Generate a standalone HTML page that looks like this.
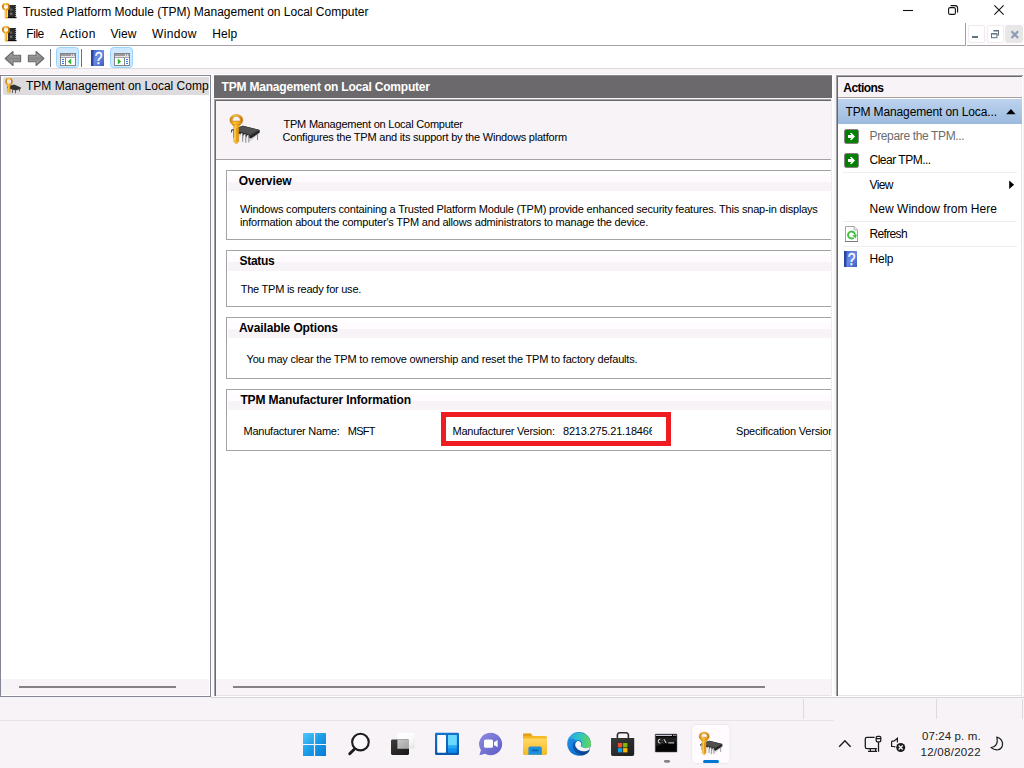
<!DOCTYPE html>
<html lang="en"><head><meta charset="utf-8"><title>Trusted Platform Module (TPM) Management on Local Computer</title>
<style>
html,body{margin:0;padding:0}
body{width:1024px;height:768px;overflow:hidden;background:#f7f3f7;position:relative;font-family:"Liberation Sans",Arial,sans-serif}
#s{position:absolute;left:0;top:0;width:1024px;height:768px;overflow:hidden}
#s div,#s span.t,#s svg{position:absolute}
#s span.t{white-space:pre;display:block}
#s svg{overflow:visible}
</style></head><body><div id="s">
<svg width="0" height="0" style="left:0;top:0"><defs>
<linearGradient id="gold" x1="0" x2="1" y1="0" y2="0"><stop offset="0" stop-color="#c77a00"/><stop offset=".35" stop-color="#ffc93c"/><stop offset=".7" stop-color="#f5a417"/><stop offset="1" stop-color="#b86c00"/></linearGradient>
<linearGradient id="goldv" x1="0" x2="0" y1="0" y2="1"><stop offset="0" stop-color="#ffd55a"/><stop offset="1" stop-color="#e8920a"/></linearGradient>
<linearGradient id="garr" x1="0" x2="0" y1="0" y2="1"><stop offset="0" stop-color="#b4b4b4"/><stop offset=".5" stop-color="#888"/><stop offset="1" stop-color="#acacac"/></linearGradient>
<linearGradient id="hlp" x1="0" x2="1" y1="0" y2="1"><stop offset="0" stop-color="#3b5fc4"/><stop offset=".5" stop-color="#6b8be6"/><stop offset="1" stop-color="#3a5cc0"/></linearGradient>
<linearGradient id="winlogo" gradientUnits="userSpaceOnUse" x1="303" y1="733" x2="326" y2="756"><stop offset="0" stop-color="#4fc8fa"/><stop offset=".5" stop-color="#1b9be8"/><stop offset="1" stop-color="#067ad6"/></linearGradient>
<linearGradient id="edge1" x1="0" x2="1" y1="0" y2="1"><stop offset="0" stop-color="#2398ea"/><stop offset=".5" stop-color="#147ad6"/><stop offset="1" stop-color="#0f5fbe"/></linearGradient>
<linearGradient id="edge3" x1="0" x2="1" y1="0" y2="1"><stop offset="0" stop-color="#0f5cb8"/><stop offset="1" stop-color="#0a3f8c"/></linearGradient>
<linearGradient id="bag" x1="0" x2="1" y1="0" y2="1"><stop offset="0" stop-color="#3b3b3b"/><stop offset="1" stop-color="#1e1e1e"/></linearGradient>
<linearGradient id="edge2" x1="0" x2="1" y1="0" y2="0"><stop offset="0" stop-color="#27a0ec"/><stop offset=".5" stop-color="#2ec4c4"/><stop offset="1" stop-color="#66d650"/></linearGradient>
<linearGradient id="fold" x1="0" x2="0" y1="0" y2="1"><stop offset="0" stop-color="#ffd966"/><stop offset="1" stop-color="#f5b921"/></linearGradient>
<linearGradient id="chat" x1="0" x2="1" y1="0" y2="1"><stop offset="0" stop-color="#8f8be0"/><stop offset="1" stop-color="#5d5bc7"/></linearGradient>
<linearGradient id="tvw" x1="0" x2="1" y1="0" y2="1"><stop offset="0" stop-color="#ffffff"/><stop offset=".6" stop-color="#fafafa"/><stop offset="1" stop-color="#e2e2e2"/></linearGradient>
<linearGradient id="tvo" x1="0" x2="1" y1="0" y2="1"><stop offset="0" stop-color="#c8c8c8"/><stop offset="1" stop-color="#a2a2a2"/></linearGradient>
<linearGradient id="wdg" x1="0" x2="0" y1="0" y2="1"><stop offset="0" stop-color="#1673cc"/><stop offset="1" stop-color="#0a57ab"/></linearGradient>
<linearGradient id="tvd" x1="0" x2="1" y1="0" y2="1"><stop offset="0" stop-color="#3c3c3c"/><stop offset="1" stop-color="#161616"/></linearGradient>
<g id="keychip16">
 <rect x="8" y="5" width="8" height="12.2" fill="#2b2b2b"/>
 <rect x="7.5" y="17" width="9" height="1.2" fill="#0c0c0c"/>
 <rect x="10" y="8.4" width="2.4" height="2.4" fill="#5a5a5a"/><rect x="10" y="12.6" width="2.4" height="2.4" fill="#6a6a6a"/>
 <path d="M15.4 6.5h1.8M15.4 8.5h1.8M15.4 10.5h1.8M15.4 12.5h1.8M15.4 14.5h1.8M15.4 16.5h1.8" stroke="#dfe6f5" stroke-width="1"/>
 <ellipse cx="6" cy="6.8" rx="3.1" ry="2.9" fill="none" stroke="url(#gold)" stroke-width="1.9"/>
 <ellipse cx="6" cy="6.2" rx="2.1" ry="1.1" fill="#f3ede0"/>
 <path d="M4.3 9.2q1.700 .9 3.400 0l-.5 1.400v7.400l-1.200 1.200-1.200-1.200v-7.400z" fill="url(#gold)"/>
</g>
<g id="keychip32">
 <path d="M17 26l20.700-2.500v2.500L29 33l-12-5z" fill="#000" opacity=".10"/>
 <path d="M9 22L20.800 17.800 37.700 21.900 37.700 24.600 29 30.600 17 25.700 9 24.500z" fill="#262626"/>
 <path d="M9 22L20.800 17.800 37.700 21.900 28.500 27.400 17 23.400z" fill="#474747"/>
 <path d="M12 21.800L20.800 18.600 35 22 28.400 25.900z" fill="#5a5a5a" opacity=".55"/>
 <path d="M10.600 22.500v7M19.600 25.300v8.500M22.700 26.300v8.500M25.800 27.300v7.200" stroke="#f4f4f8" stroke-width="1.700"/>
 <path d="M11.600 23v6.500M20.700 26v7.800M23.800 27v7.800M26.900 28v6.500M35.500 26.500v5.500" stroke="#77777f" stroke-width=".9"/>
 <ellipse cx="14.350" cy="12.100" rx="6.500" ry="5.700" fill="url(#gold)" stroke="#c07c0a" stroke-width=".5"/>
 <path d="M10.100 13.100a4.250 4.900 0 0 1 8.500 0z" fill="#f7f3f7" stroke="#b26d05" stroke-width=".5"/>
 <path d="M10.300 16.300h8.100l-1.600 2.200v15l-2.500 2.500-2.500-2.500v-15z" fill="url(#gold)" stroke="#c07c0a" stroke-width=".4"/>
 <path d="M14.900 20v13.500" stroke="#b86c00" stroke-width=".7" opacity=".75"/>
 <path d="M12.600 19.500v13.500" stroke="#ffe38a" stroke-width=".7" opacity=".8"/>
</g>
</defs></svg><div style="left:0px;top:0px;width:1024px;height:45px;background:#fff"></div><div style="left:0px;top:45px;width:966px;height:1px;background:#a5a2a5"></div><div style="left:0px;top:46px;width:1024px;height:22px;background:#fff"></div><div style="left:0px;top:68px;width:1024px;height:1px;background:#dedbde"></div><div style="left:0px;top:74px;width:1024px;height:1px;background:#fffbff"></div><div style="left:211px;top:75px;width:1px;height:623px;background:#fffbff"></div><div style="left:213px;top:75px;width:1px;height:623px;background:#fffbff"></div><svg style="left:0;top:-2px" width="20" height="24" viewBox="0 0 20 24"><use href="#keychip16" y="2"/></svg><span class="t" style="left:23px;top:2.84px;font:normal 12px/18px 'Liberation Sans',Arial,sans-serif;color:#000;letter-spacing:-0.003px;">Trusted Platform Module (TPM) Management on Local Computer</span><svg style="left:896px;top:0" width="128" height="22" viewBox="896 0 128 22" fill="none" stroke="#111" stroke-width="1.1">
<path d="M903 10.500h10"/>
<rect x="948.600" y="7.600" width="6.800" height="6.800" rx="1.500"/><path d="M950.600 5.600h4.600a2.400 2.400 0 0 1 2.400 2.400v4.600"/>
<path d="M994.400 5.400l9.200 9.200M1003.600 5.400l-9.200 9.200"/></svg><svg style="left:0;top:21px" width="20" height="24" viewBox="0 0 20 24"><use href="#keychip16" y="2"/></svg><span class="t" style="left:26.3px;top:24.84px;font:normal 12px/18px 'Liberation Sans',Arial,sans-serif;color:#000;letter-spacing:-0.445px;">File</span><span class="t" style="left:60px;top:24.84px;font:normal 12px/18px 'Liberation Sans',Arial,sans-serif;color:#000;letter-spacing:0.390px;">Action</span><span class="t" style="left:110.6px;top:24.84px;font:normal 12px/18px 'Liberation Sans',Arial,sans-serif;color:#000;letter-spacing:-0.031px;">View</span><span class="t" style="left:152px;top:24.84px;font:normal 12px/18px 'Liberation Sans',Arial,sans-serif;color:#000;letter-spacing:0.324px;">Window</span><span class="t" style="left:212.3px;top:24.84px;font:normal 12px/18px 'Liberation Sans',Arial,sans-serif;color:#000;letter-spacing:0.107px;">Help</span><div style="left:965px;top:23px;width:1px;height:22px;background:#a5a2a5"></div><div style="left:966px;top:23px;width:58px;height:23px;background:#fff"></div><div style="left:967px;top:24px;width:57px;height:21px;background:#fffbff"></div><div style="left:967px;top:45px;width:57px;height:1px;background:#a5a2a5"></div><div style="left:968px;top:25px;width:17px;height:18px;background:#fff;border:1px solid #efebef;box-sizing:border-box;border-radius:2px"></div><div style="left:987px;top:25px;width:17px;height:18px;background:#fff;border:1px solid #efebef;box-sizing:border-box;border-radius:2px"></div><div style="left:1005px;top:25px;width:18px;height:18px;background:#e7e7e7;border-radius:3px"></div><svg style="left:966px;top:23px" width="58" height="22" viewBox="966 23 58 22" fill="none" stroke="#5f7383" stroke-width="1">
<rect x="972" y="36" width="6" height="2" fill="#5f7383" stroke="none"/>
<path d="M993.500 31h5.500M998.500 30.500v4.800h-1.200" /><path d="M993.500 30.500h5.500" />
<rect x="991.500" y="34" width="5.400" height="3.700"/><path d="M991 33.600h6.400"/>
<path d="M1011.500 31.300l6.600 6.600M1018.100 31.300l-6.600 6.600" stroke="#8e9ab5" stroke-width="2.100"/></svg><svg style="left:0;top:46px" width="140" height="23" viewBox="0 46 140 23">
<path d="M5.2 58.5L13 51.5V55.3H20.6V61.7H13V65.5z" fill="url(#garr)" stroke="#6b696b" stroke-width="1.1" stroke-linejoin="round"/>
<path d="M43.9 58.5L36.1 51.5V55.3H28.4V61.7H36.1V65.5z" fill="url(#garr)" stroke="#6b696b" stroke-width="1.1" stroke-linejoin="round"/>
<rect x="50" y="49" width="1" height="18" fill="#737173"/>
<rect x="56.5" y="47.5" width="22" height="20" rx="3" fill="#cee9ff" stroke="#9cd3fb"/>
<rect x="81" y="49" width="1" height="18" fill="#737173"/>
<rect x="110.5" y="47.5" width="22" height="20" rx="3" fill="#cee9ff" stroke="#9cd3fb"/>
<!-- icon1 -->
<rect x="60.5" y="53.5" width="15" height="12" fill="#fff" stroke="#848284"/>
<rect x="61" y="54" width="14" height="2" fill="#9c9a9c"/><rect x="61" y="56" width="14" height="1" fill="#e7e3e7"/><rect x="61" y="57" width="14" height="1" fill="#a5a2a5"/>
<rect x="71" y="54.4" width="1.2" height="1.2" fill="#fff"/><rect x="73" y="54.4" width="1.2" height="1.2" fill="#fff"/>
<rect x="65" y="58" width="1" height="7" fill="#848284"/>
<path d="M62 59.5h2M62 61.5h2M62 63.5h2" stroke="#2d7bdb" stroke-width="1"/>
<path d="M71.2 58.6v5.8l-3.4-2.9z" fill="#31b231"/>
<!-- help -->
<rect x="91" y="50" width="13" height="16" fill="url(#hlp)"/><rect x="91" y="50" width="2.4" height="16" fill="#2947a0"/>
<!-- icon2 -->
<rect x="114.5" y="53.5" width="15" height="12" fill="#fff" stroke="#848284"/>
<rect x="115" y="54" width="14" height="2" fill="#9c9a9c"/><rect x="115" y="56" width="14" height="1" fill="#e7e3e7"/><rect x="115" y="57" width="14" height="1" fill="#a5a2a5"/>
<rect x="125" y="54.4" width="1.2" height="1.2" fill="#fff"/><rect x="127" y="54.4" width="1.2" height="1.2" fill="#fff"/>
<rect x="124" y="58" width="1" height="7" fill="#848284"/>
<path d="M126 59.5h2M126 61.5h2M126 63.5h2" stroke="#2d7bdb" stroke-width="1"/>
<path d="M117.8 58.6v5.8l3.4-2.9z" fill="#31b231"/>
<text transform="translate(98.600 64.200) scale(.82 1)" font-family="Liberation Sans,Arial,sans-serif" font-size="16.800" fill="#fff" text-anchor="middle" stroke="#fff" stroke-width=".3">?</text>
</svg><div style="left:0px;top:75px;width:211px;height:622px;background:#fff;border:1px solid #848694;box-sizing:border-box"></div><div style="left:3px;top:77px;width:206px;height:18px;background:#dedbde;border-radius:2px 0 0 2px"></div><div style="left:1px;top:679px;width:208px;height:16px;background:#f7f3f7"></div><div style="left:19px;top:686px;width:157px;height:2px;background:#848284"></div><svg style="left:4px;top:77px" width="20" height="18" viewBox="4 77 20 18">
<path d="M7.5 86.5L14 84.6 21 87.4 20.5 88.9 15.6 90.6 7.5 88.3z" fill="#333"/>
<path d="M9 88.5v3M12.5 89.5v3.4M15.5 90.3v3M19.5 89v2.4" stroke="#555" stroke-width="1"/>
<circle cx="9" cy="81.500" r="2.950" fill="#eee8f0" stroke="url(#gold)" stroke-width="1.400"/>
<path d="M7.600 84.600h2.800v7.600l-1.400 1.200-1.400-1.200z" fill="url(#gold)"/>
</svg><span class="t" style="left:26px;top:76.84px;font:normal 12px/18px 'Liberation Sans',Arial,sans-serif;color:#000;letter-spacing:-0.006px;">TPM Management on Local Comp</span><div style="left:214px;top:75px;width:618px;height:23px;background:#6b696b"></div><div style="left:214px;top:75px;width:618px;height:1px;background:#8c8a8c"></div><span class="t" style="left:221.6px;top:77.84px;font:bold 12px/18px 'Liberation Sans',Arial,sans-serif;color:#fff;letter-spacing:-0.203px;">TPM Management on Local Computer</span><div style="left:214px;top:99px;width:617px;height:598px;background:#fff"></div><div style="left:214px;top:99px;width:617px;height:1px;background:#a5a2a5"></div><div style="left:214px;top:100px;width:617px;height:1px;background:#6b696b"></div><div style="left:214px;top:99px;width:1px;height:597px;background:#a5a2a5"></div><div style="left:215px;top:100px;width:1px;height:596px;background:#6b696b"></div><div style="left:832px;top:75px;width:2px;height:622px;background:#fff"></div><div style="left:831px;top:99px;width:1px;height:597px;background:#efebef"></div><div style="left:216px;top:695px;width:615px;height:1px;background:#e7e3e7"></div><div style="left:211px;top:697px;width:813px;height:1px;background:#d6d3d6"></div><div style="left:216px;top:101px;width:615px;height:58px;background:#f7f3f7"></div><div style="left:216px;top:159px;width:615px;height:1px;background:#a5a2a5"></div><svg style="left:222px;top:108px" width="44" height="44" viewBox="0 0 44 44"><use href="#keychip32"/></svg><span class="t" style="left:283.5px;top:115.69px;font:normal 11px/16px 'Liberation Sans',Arial,sans-serif;color:#000;letter-spacing:-0.225px;">TPM Management on Local Computer</span><span class="t" style="left:282.5px;top:128.69px;font:normal 11px/16px 'Liberation Sans',Arial,sans-serif;color:#000;letter-spacing:-0.206px;">Configures the TPM and its support by the Windows platform</span><div style="left:216px;top:679px;width:615px;height:16px;background:#f7f3f7"></div><div style="left:233px;top:686px;width:532px;height:2px;background:#848284"></div><div style="left:226px;top:170px;width:620px;height:70px;border:1px solid #a5a2a5;box-sizing:border-box;background:#fff;clip-path:inset(0 15px 0 0)"></div><div style="left:228px;top:171px;width:603px;height:20px;background:linear-gradient(#fff 0,#fff 4px,#fffbff 4px,#fffbff 11px,#f7f3f7 11px)"></div><span class="t" style="left:238.8px;top:171.84px;font:bold 12px/18px 'Liberation Sans',Arial,sans-serif;color:#000;letter-spacing:-0.081px;">Overview</span><span class="t" style="left:240px;top:200.69px;font:normal 11px/16px 'Liberation Sans',Arial,sans-serif;color:#000;letter-spacing:-0.196px;">Windows computers containing a Trusted Platform Module (TPM) provide enhanced security features. This snap-in displays</span><span class="t" style="left:240px;top:213.69px;font:normal 11px/16px 'Liberation Sans',Arial,sans-serif;color:#000;letter-spacing:-0.194px;">information about the computer&#x27;s TPM and allows administrators to manage the device.</span><div style="left:226px;top:250px;width:620px;height:57px;border:1px solid #a5a2a5;box-sizing:border-box;background:#fff;clip-path:inset(0 15px 0 0)"></div><div style="left:228px;top:251px;width:603px;height:20px;background:linear-gradient(#fff 0,#fff 4px,#fffbff 4px,#fffbff 11px,#f7f3f7 11px)"></div><span class="t" style="left:239.4px;top:251.84px;font:bold 12px/18px 'Liberation Sans',Arial,sans-serif;color:#000;letter-spacing:-0.255px;">Status</span><span class="t" style="left:240.75px;top:281.19px;font:normal 11px/16px 'Liberation Sans',Arial,sans-serif;color:#000;letter-spacing:-0.241px;">The TPM is ready for use.</span><div style="left:226px;top:317px;width:620px;height:62px;border:1px solid #a5a2a5;box-sizing:border-box;background:#fff;clip-path:inset(0 15px 0 0)"></div><div style="left:228px;top:318px;width:603px;height:20px;background:linear-gradient(#fff 0,#fff 4px,#fffbff 4px,#fffbff 11px,#f7f3f7 11px)"></div><span class="t" style="left:239px;top:318.84px;font:bold 12px/18px 'Liberation Sans',Arial,sans-serif;color:#000;letter-spacing:-0.119px;">Available Options</span><span class="t" style="left:246.5px;top:351.19px;font:normal 11px/16px 'Liberation Sans',Arial,sans-serif;color:#000;letter-spacing:-0.178px;">You may clear the TPM to remove ownership and reset the TPM to factory defaults.</span><div style="left:226px;top:389px;width:620px;height:62px;border:1px solid #a5a2a5;box-sizing:border-box;background:#fff;clip-path:inset(0 15px 0 0)"></div><div style="left:228px;top:390px;width:603px;height:20px;background:linear-gradient(#fff 0,#fff 4px,#fffbff 4px,#fffbff 11px,#f7f3f7 11px)"></div><span class="t" style="left:240.4px;top:390.84px;font:bold 12px/18px 'Liberation Sans',Arial,sans-serif;color:#000;letter-spacing:-0.126px;">TPM Manufacturer Information</span><span class="t" style="left:243.5px;top:423.19px;font:normal 11px/16px 'Liberation Sans',Arial,sans-serif;color:#000;letter-spacing:-0.233px;">Manufacturer Name:</span><span class="t" style="left:347.8px;top:423.19px;font:normal 11px/16px 'Liberation Sans',Arial,sans-serif;color:#000;letter-spacing:-0.779px;">MSFT</span><div style="left:441px;top:412px;width:230px;height:34px;border:5px solid #ef1c21;box-sizing:border-box"></div><span class="t" style="left:452.5px;top:423.19px;font:normal 11px/16px 'Liberation Sans',Arial,sans-serif;color:#000;letter-spacing:-0.255px;">Manufacturer Version:</span><div style="left:560px;top:420px;width:92px;height:22px;overflow:hidden"><span class="t" style="left:3px;top:3.19px;font:normal 11px/16px 'Liberation Sans',Arial,sans-serif;color:#000;letter-spacing:0.000px;letter-spacing:-0.19px;">8213.275.21.18466</span></div><div style="left:730px;top:420px;width:101px;height:22px;overflow:hidden"><span class="t" style="left:6px;top:3.19px;font:normal 11px/16px 'Liberation Sans',Arial,sans-serif;color:#000;letter-spacing:0.000px;letter-spacing:-0.19px;">Specification Version:</span></div><div style="left:836px;top:75px;width:187px;height:622px;background:#fff"></div><div style="left:836px;top:75px;width:187px;height:1px;background:#a5a2a5"></div><div style="left:836px;top:76px;width:187px;height:1px;background:#6b696b"></div><div style="left:836px;top:75px;width:1px;height:621px;background:#a5a2a5"></div><div style="left:837px;top:76px;width:1px;height:620px;background:#6b696b"></div><div style="left:838px;top:695px;width:184px;height:1px;background:#e7e3e7"></div><div style="left:1021px;top:77px;width:1px;height:620px;background:#e7e3e7"></div><div style="left:1022px;top:76px;width:1px;height:621px;background:#fff"></div><div style="left:838px;top:77px;width:184px;height:20px;background:#f7f3f7"></div><div style="left:838px;top:97px;width:184px;height:1px;background:#a5a2a5"></div><div style="left:838px;top:99px;width:184px;height:25px;background:linear-gradient(#bdd3ef,#9cbade)"></div><span class="t" style="left:843.3px;top:78.84px;font:bold 12px/18px 'Liberation Sans',Arial,sans-serif;color:#000;letter-spacing:-0.551px;">Actions</span><span class="t" style="left:845.5px;top:102.84px;font:normal 12px/18px 'Liberation Sans',Arial,sans-serif;color:#000;letter-spacing:-0.135px;">TPM Management on Loca...</span><svg style="left:1004px;top:107px" width="14" height="9" viewBox="1004 107 14 9"><path d="M1006.2 114.3h9.4l-4.7-5.2z" fill="#000"/></svg><svg style="left:844px;top:129px" width="15" height="15" viewBox="0 0 15 15"><rect x=".5" y=".5" width="14" height="14" rx="1.8" fill="#008200" stroke="#8c7d8c"/><path d="M4 6h3.300L6 4h1.700L11 7.500 7.700 11H6l1.300-2H4z" fill="#fff"/></svg><svg style="left:844px;top:153px" width="15" height="15" viewBox="0 0 15 15"><rect x=".5" y=".5" width="14" height="14" rx="1.8" fill="#008200" stroke="#8c7d8c"/><path d="M4 6h3.300L6 4h1.700L11 7.500 7.700 11H6l1.300-2H4z" fill="#fff"/></svg><span class="t" style="left:869.5px;top:126.84px;font:normal 12px/18px 'Liberation Sans',Arial,sans-serif;color:#6b6d6b;letter-spacing:-0.357px;">Prepare the TPM...</span><span class="t" style="left:869.5px;top:150.84px;font:normal 12px/18px 'Liberation Sans',Arial,sans-serif;color:#000;letter-spacing:-0.495px;">Clear TPM...</span><div style="left:843px;top:172px;width:174px;height:1px;background:#efebef"></div><span class="t" style="left:869.5px;top:175.84px;font:normal 12px/18px 'Liberation Sans',Arial,sans-serif;color:#000;letter-spacing:-0.598px;">View</span><svg style="left:1008px;top:179px" width="8" height="11" viewBox="1008 179 8 11"><path d="M1009.2 180.4v8.6l4.9-4.3z" fill="#000"/></svg><span class="t" style="left:869.5px;top:199.84px;font:normal 12px/18px 'Liberation Sans',Arial,sans-serif;color:#000;letter-spacing:0.042px;">New Window from Here</span><div style="left:843px;top:221px;width:174px;height:1px;background:#efebef"></div><svg style="left:844px;top:226px" width="15" height="16" viewBox="0 0 15 16"><path d="M1.500.5h8.600l3.400 3.400v11.600h-12z" fill="#fff" stroke="#a5a2a5" stroke-width="1"/><path d="M1 15.500h13" stroke="#7b797b"/><path d="M10.100.5v3.400h3.400" fill="#efebef" stroke="#a5a2a5" stroke-width=".8"/>
<path d="M11 8.700a3.500 3.500 0 1 0-1.300 3" fill="none" stroke="#42c142" stroke-width="1.900"/><path d="M8.400 9.300l4.600-.7-1.400 4z" fill="#42c142"/></svg><span class="t" style="left:869.5px;top:224.84px;font:normal 12px/18px 'Liberation Sans',Arial,sans-serif;color:#000;letter-spacing:-0.653px;">Refresh</span><div style="left:843px;top:246px;width:174px;height:1px;background:#efebef"></div><svg style="left:844px;top:251px" width="13" height="16" viewBox="0 0 13 16"><rect width="13" height="16" fill="url(#hlp)"/><rect width="2.4" height="16" fill="#2947a0"/><text transform="translate(7.600 14) scale(.82 1)" font-family="Liberation Sans,Arial,sans-serif" font-size="16.800" fill="#fff" text-anchor="middle" stroke="#fff" stroke-width=".3">?</text></svg><span class="t" style="left:869.5px;top:249.84px;font:normal 12px/18px 'Liberation Sans',Arial,sans-serif;color:#000;letter-spacing:-0.227px;">Help</span><div style="left:803px;top:699px;width:1px;height:20px;background:#dedbde"></div><div style="left:936px;top:699px;width:1px;height:20px;background:#dedbde"></div><div style="left:1022px;top:699px;width:1px;height:20px;background:#dedbde"></div><div style="left:0px;top:720px;width:834px;height:1px;background:#e7e3e7"></div><svg style="left:290px;top:722px" width="460" height="46" viewBox="290 722 460 46">
<!-- start -->
<rect x="303" y="733" width="10.900" height="10.900" rx=".5" fill="url(#winlogo)"/><rect x="315.100" y="733" width="10.900" height="10.900" rx=".5" fill="url(#winlogo)"/>
<rect x="303" y="745.100" width="10.900" height="10.900" rx=".5" fill="url(#winlogo)"/><rect x="315.100" y="745.100" width="10.900" height="10.900" rx=".5" fill="url(#winlogo)"/>
<!-- search -->
<circle cx="360.450" cy="742.100" r="8.300" fill="#fbf9fb" stroke="#1c1c1c" stroke-width="2.100"/><path d="M354.300 749.200l-4.600 4.600" stroke="#1c1c1c" stroke-width="2.900" stroke-linecap="round"/>
<!-- task view -->
<rect x="397.400" y="732.800" width="17.400" height="16" rx="1.300" fill="url(#tvw)"/>
<rect x="391" y="739.600" width="18" height="15.300" rx="1.300" fill="url(#tvd)"/>
<rect x="397.400" y="739.600" width="11.600" height="9.200" fill="url(#tvo)"/>
<!-- widgets -->
<rect x="435" y="732.800" width="24" height="22.200" rx="1.300" fill="url(#wdg)"/>
<rect x="437.200" y="735" width="8.800" height="17.800" rx=".8" fill="#fbfbfb"/>
<rect x="448" y="735" width="8.800" height="17.800" rx=".6" fill="#0f8eee"/>
<rect x="448" y="735" width="8.800" height="13.400" rx=".6" fill="#29a6f5"/>
<rect x="448" y="735" width="8.800" height="10.200" rx=".6" fill="#6bd8ff"/>
<!-- chat -->
<path d="M490.6 732.8a11.6 11.2 0 1 1-5.6 21l-5.6 1.4 1.5-5.2a11.6 11.2 0 0 1 9.7-17.2z" fill="url(#chat)"/>
<rect x="484" y="739.4" width="9" height="8.4" rx="1.6" fill="#fff"/><path d="M494 742.3l3.6-2.4v7.4l-3.6-2.4z" fill="#fff"/>
<!-- explorer -->
<path d="M523 735.2a1.6 1.6 0 0 1 1.6-1.6h6.2l2.2 2.4h12.4a1.6 1.6 0 0 1 1.6 1.6v15.6a1.6 1.6 0 0 1-1.6 1.6h-20.8a1.6 1.6 0 0 1-1.6-1.6z" fill="#f5b921"/>
<path d="M523 738.6h24v14.6a1.6 1.6 0 0 1-1.6 1.6h-20.8a1.6 1.6 0 0 1-1.6-1.6z" fill="url(#fold)"/>
<path d="M523 733.6h8.2v2.6H523z" fill="#e59e1c"/>
<path d="M528.4 748.6a2 2 0 0 1 2-2h9.4a2 2 0 0 1 2 2v6.2h-13.4z" fill="#1c8fe0"/><rect x="531.6" y="749.6" width="7" height="1.6" rx=".8" fill="#0f62b0"/>
<!-- edge -->
<circle cx="579" cy="743.850" r="11.800" fill="url(#edge1)"/>
<path d="M567.050 743.300A12 12 0 0 1 590.950 745.200c-.5 1.900-2.600 3-5 3-2.300 0-4.300-.7-5.400-2 1.700-1.300 2-3.400.7-4.800-1.300-1.500-3.600-1.900-5.300-.800-1.300-1.500-3.200-2.300-5.200-2-1.900.3-3 1.300-3.700 4.700z" fill="url(#edge2)"/>
<path d="M574.600 741.400c-1.900 1.500-2.500 4.300-1.400 7.100 1.400 3.600 5 6.300 9.200 6.900 2.300-.4 4.800-1.700 6.300-3.500.6-.8 1-1.600 1.100-2.400-1.700 1.300-4 2-6.300 1.800-3.400-.3-6.300-2.300-7.500-5.100-.7-1.700-.8-3.300-.5-4.600-.3-.1-.6-.2-.9-.2z" fill="url(#edge3)"/>
<path d="M576.200 742.200a2.900 2.900 0 0 1 5 2.700c-.2.500-.5.900-.8 1.200 1.100 1.300 3.100 2.100 5.400 2.100 1.500 0 2.900-.4 3.900-1.100-.1 1-.4 1.900-.9 2.700-1.500 1.100-3.600 1.700-5.800 1.500-3.400-.3-6.300-2.300-7.500-5.100-.6-1.400-.3-2.900.7-4z" fill="#f7f3f7"/>
<!-- store -->
<path d="M617.400 738v-3a2.200 2.200 0 0 1 2.200-2.200h6.600a2.200 2.200 0 0 1 2.200 2.200v3" fill="none" stroke="#2b2b2b" stroke-width="1.600"/>
<path d="M611 737.900h23.200v16.300a1.800 1.800 0 0 1-1.800 1.800h-19.600a1.800 1.800 0 0 1-1.800-1.800z" fill="url(#bag)"/>
<rect x="617.900" y="743" width="4.300" height="4.300" fill="#f25022"/><rect x="623.100" y="743" width="4.300" height="4.300" fill="#7fba00"/>
<rect x="617.900" y="748.100" width="4.300" height="4.300" fill="#00a4ef"/><rect x="623.100" y="748.100" width="4.300" height="4.300" fill="#ffb900"/>
<!-- cmd -->
<rect x="655.200" y="734" width="21.800" height="18.100" rx=".6" fill="#050505" stroke="#6b696b" stroke-width=".5"/>
<rect x="655.800" y="734.800" width="16.200" height="1.100" fill="#dcdcec"/><rect x="673" y="734.800" width="1.600" height="1.100" fill="#b8b8c8"/><rect x="675.200" y="734.800" width="1.200" height="1.100" fill="#b8b8c8"/>
<path d="M655.600 737.200h21v4.500q-12 .5-21 5z" fill="#fff" opacity=".10"/>
<path d="M660.300 739.300q-2.100-.3-2.100 1.900t2.100 1.900M662.200 740.200v.4M662.200 742.300v.4M664 739.200l2.200 4" stroke="#f0f0f0" stroke-width="1" fill="none"/>
<path d="M668.200 742.900h6" stroke="#e8e8e8" stroke-width="1"/>
<rect x="664" y="760" width="6" height="2.700" rx="1.350" fill="#858385"/>
<!-- active tpm -->
<rect x="691.700" y="724.400" width="38.300" height="39.200" rx="4" fill="#fffbff" stroke="#e7e3e7" stroke-width=".8"/>
<rect x="703" y="760" width="16" height="3" rx="1.500" fill="#0078d4"/>
</svg><svg style="left:693.2px;top:727px" width="34.300" height="34.300" viewBox="0 0 44 44"><use href="#keychip32"/></svg><svg style="left:830px;top:722px" width="194" height="46" viewBox="830 722 194 46" fill="none" stroke="#1c1c1c" stroke-width="1.3">
<path d="M839.200 746.800l5.700-6 5.700 6" stroke-width="1.400"/>
<path d="M874.600 737.400h-7.600a1.700 1.700 0 0 0-1.700 1.700v7.900a1.700 1.700 0 0 0 1.700 1.700h9.900M868 751.400h9M870.300 748.700v2.700M875.600 748.700v2.700"/>
<rect x="876.200" y="736.300" width="4.600" height="5.600" rx="1.300"/><path d="M876.200 738.600h4.600M878.500 742v9.800"/>
<path d="M891.600 741.200h2.300l3.500-2.900v4.200M891.600 741.200v5.300h2.700l1 .8" stroke-width="1.200"/>
<circle cx="900.700" cy="747.500" r="4.500" fill="#1c1c1c" stroke="none"/><path d="M898.700 745.500l4 4M902.700 745.500l-4 4" stroke="#fff" stroke-width="1.200"/>
<path d="M996.800 737.200c4.200.8 6.700 4.800 5.500 8.800-1.300 4-6.300 5.500-11.300 1.600 4-.1 7.500-3.600 5.800-10.400z" stroke-width="1.200" stroke-linejoin="round"/>
</svg><span class="t" style="left:922px;top:727.92px;font:normal 11.5px/17px 'Liberation Sans',Arial,sans-serif;color:#1c1c1c;letter-spacing:0.107px;">07:24 p. m.</span><span class="t" style="left:920.5px;top:743.92px;font:normal 11.5px/17px 'Liberation Sans',Arial,sans-serif;color:#1c1c1c;letter-spacing:0.283px;">12/08/2022</span></div></body></html>
